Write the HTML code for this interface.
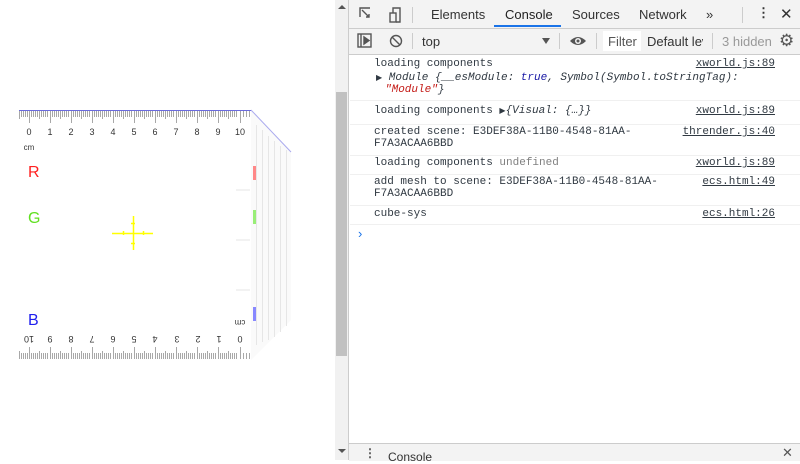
<!DOCTYPE html>
<html><head><style>
body{margin:0;width:800px;height:460px;position:relative;overflow:hidden;background:#fff;font-family:"Liberation Sans",sans-serif}
.a{position:absolute}
.mono{font-family:"Liberation Mono",monospace;font-size:11px;color:#303942}
.row{position:absolute;left:350px;width:450px;border-bottom:1px solid #f0f0f0}
.src{position:absolute;right:25px;text-decoration:underline;color:#303942}
.tab{position:absolute;top:7px;font-size:13px;color:#333}
</style></head><body>
<div class="a" style="left:335px;top:0;width:13px;height:460px;background:#f1f1f1"></div>
<div class="a" style="left:336px;top:92px;width:11px;height:264px;background:#c1c1c1"></div>
<div class="a" style="left:338px;top:5px;border:4px solid transparent;border-bottom:4px solid #555;border-top:0"></div>
<div class="a" style="left:338px;top:449px;border:4px solid transparent;border-top:4px solid #555;border-bottom:0"></div>
<div class="a" style="left:348px;top:0;width:1px;height:460px;background:#ccc"></div>
<svg class="a" style="left:0;top:0" width="335" height="460">
<polygon points="251,110 291,152 291,320 251,360" fill="#fafafa"/>
<line x1="19" y1="110.5" x2="251" y2="110.5" stroke="#6b6bdd" stroke-width="1"/>
<line x1="251" y1="110" x2="291" y2="152" stroke="#aaaaee"/>
<g stroke="#a8a8a8" stroke-width="1" shape-rendering="crispEdges">
<path d="M19.5 111v8M21.5 111v6M23.5 111v6M25.5 111v6M27.5 111v6M29.5 111v12M31.5 111v6M33.5 111v6M35.5 111v6M37.5 111v6M39.5 111v8M41.5 111v6M43.5 111v6M45.5 111v6M47.5 111v6M50.5 111v12M52.5 111v6M54.5 111v6M56.5 111v6M58.5 111v6M60.5 111v8M62.5 111v6M64.5 111v6M66.5 111v6M68.5 111v6M71.5 111v12M73.5 111v6M75.5 111v6M77.5 111v6M79.5 111v6M81.5 111v8M83.5 111v6M85.5 111v6M87.5 111v6M89.5 111v6M92.5 111v12M94.5 111v6M96.5 111v6M98.5 111v6M100.5 111v6M102.5 111v8M104.5 111v6M106.5 111v6M108.5 111v6M110.5 111v6M113.5 111v12M115.5 111v6M117.5 111v6M119.5 111v6M121.5 111v6M123.5 111v8M125.5 111v6M127.5 111v6M129.5 111v6M131.5 111v6M134.5 111v12M136.5 111v6M138.5 111v6M140.5 111v6M142.5 111v6M144.5 111v8M146.5 111v6M148.5 111v6M150.5 111v6M152.5 111v6M155.5 111v12M157.5 111v6M159.5 111v6M161.5 111v6M163.5 111v6M165.5 111v8M167.5 111v6M169.5 111v6M171.5 111v6M173.5 111v6M176.5 111v12M178.5 111v6M180.5 111v6M182.5 111v6M184.5 111v6M186.5 111v8M188.5 111v6M190.5 111v6M192.5 111v6M194.5 111v6M197.5 111v12M199.5 111v6M201.5 111v6M203.5 111v6M205.5 111v6M207.5 111v8M209.5 111v6M211.5 111v6M213.5 111v6M215.5 111v6M218.5 111v12M220.5 111v6M222.5 111v6M224.5 111v6M226.5 111v6M228.5 111v8M230.5 111v6M232.5 111v6M234.5 111v6M236.5 111v6M240.5 111v12M243.5 111v6M246.5 111v6M249.5 111v6"/>
<path d="M19.5 359v-8M21.5 359v-6M23.5 359v-6M25.5 359v-6M27.5 359v-6M29.5 359v-12M31.5 359v-6M33.5 359v-6M35.5 359v-6M37.5 359v-6M39.5 359v-8M41.5 359v-6M43.5 359v-6M45.5 359v-6M47.5 359v-6M50.5 359v-12M52.5 359v-6M54.5 359v-6M56.5 359v-6M58.5 359v-6M60.5 359v-8M62.5 359v-6M64.5 359v-6M66.5 359v-6M68.5 359v-6M71.5 359v-12M73.5 359v-6M75.5 359v-6M77.5 359v-6M79.5 359v-6M81.5 359v-8M83.5 359v-6M85.5 359v-6M87.5 359v-6M89.5 359v-6M92.5 359v-12M94.5 359v-6M96.5 359v-6M98.5 359v-6M100.5 359v-6M102.5 359v-8M104.5 359v-6M106.5 359v-6M108.5 359v-6M110.5 359v-6M113.5 359v-12M115.5 359v-6M117.5 359v-6M119.5 359v-6M121.5 359v-6M123.5 359v-8M125.5 359v-6M127.5 359v-6M129.5 359v-6M131.5 359v-6M134.5 359v-12M136.5 359v-6M138.5 359v-6M140.5 359v-6M142.5 359v-6M144.5 359v-8M146.5 359v-6M148.5 359v-6M150.5 359v-6M152.5 359v-6M155.5 359v-12M157.5 359v-6M159.5 359v-6M161.5 359v-6M163.5 359v-6M165.5 359v-8M167.5 359v-6M169.5 359v-6M171.5 359v-6M173.5 359v-6M176.5 359v-12M178.5 359v-6M180.5 359v-6M182.5 359v-6M184.5 359v-6M186.5 359v-8M188.5 359v-6M190.5 359v-6M192.5 359v-6M194.5 359v-6M197.5 359v-12M199.5 359v-6M201.5 359v-6M203.5 359v-6M205.5 359v-6M207.5 359v-8M209.5 359v-6M211.5 359v-6M213.5 359v-6M215.5 359v-6M218.5 359v-12M220.5 359v-6M222.5 359v-6M224.5 359v-6M226.5 359v-6M228.5 359v-8M230.5 359v-6M232.5 359v-6M234.5 359v-6M236.5 359v-6M240.5 359v-12M243.5 359v-6M246.5 359v-6M249.5 359v-6"/>
</g>
<g stroke="#e6e6e6" shape-rendering="crispEdges"><path d="M256.5 125v220M262.5 130v212M268.5 136v204M274.5 141v196M280.5 146v186M286.5 150v176"/><path d="M236 190h14M236 240h14M236 290h14"/></g>
<g font-size="9" fill="#333" text-anchor="middle">
<text x="29" y="135">0</text><text x="50" y="135">1</text><text x="71" y="135">2</text><text x="92" y="135">3</text><text x="113" y="135">4</text><text x="134" y="135">5</text><text x="155" y="135">6</text><text x="176" y="135">7</text><text x="197" y="135">8</text><text x="218" y="135">9</text><text x="240" y="135">10</text>
<text x="29" y="150" font-size="8">cm</text>
</g>
<g font-size="9" fill="#333" text-anchor="middle">
<text transform="translate(240,336) rotate(180)">0</text><text transform="translate(219,336) rotate(180)">1</text><text transform="translate(198,336) rotate(180)">2</text><text transform="translate(177,336) rotate(180)">3</text><text transform="translate(155,336) rotate(180)">4</text><text transform="translate(134,336) rotate(180)">5</text><text transform="translate(113,336) rotate(180)">6</text><text transform="translate(92,336) rotate(180)">7</text><text transform="translate(71,336) rotate(180)">8</text><text transform="translate(50,336) rotate(180)">9</text><text transform="translate(29,336) rotate(180)">10</text>
<text transform="translate(240,320) rotate(180)" font-size="8">cm</text>
</g>
<text x="28" y="177" font-size="16" fill="#ff2020">R</text>
<text x="28" y="223" font-size="16" fill="#60e020">G</text>
<text x="28" y="325" font-size="16" fill="#2020ee">B</text>
<g stroke="#ffff00" stroke-width="1.5"><path d="M112 233.5h41M133.5 216v34M123.5 231v4M143.5 231v4M131 223.5h4M131 243.5h4"/></g>
<rect x="253" y="166" width="3" height="14" fill="#f88"/>
<rect x="253" y="210" width="3" height="14" fill="#9e7"/>
<rect x="253" y="307" width="3" height="14" fill="#88f"/>
</svg>
<div class="a" style="left:349px;top:0;width:451px;height:28px;background:#f3f3f3;border-bottom:1px solid #ccc"></div>
<svg class="a" style="left:358px;top:6px" width="50" height="18" fill="none" stroke="#555" stroke-width="1.4">
<path d="M2 11V2h10M4 4l7 7M8 11h3v-3"/><rect x="32" y="7" width="6" height="9"/><path d="M35 7V2h7v14h-4"/>
</svg>
<div class="a" style="left:412px;top:7px;width:1px;height:16px;background:#ccc"></div>
<div class="tab" style="left:431px">Elements</div>
<div class="tab" style="left:505px;color:#222">Console</div>
<div class="a" style="left:494px;top:25px;width:67px;height:2px;background:#1a73e8"></div>
<div class="tab" style="left:572px">Sources</div>
<div class="tab" style="left:639px">Network</div>
<div class="tab" style="left:706px">»</div>
<div class="a" style="left:742px;top:7px;width:1px;height:16px;background:#ccc"></div>
<div class="tab" style="left:757px;font-weight:bold;top:5px">⋮</div>
<div class="tab" style="left:780px;font-size:15px;top:5px">✕</div>
<div class="a" style="left:349px;top:29px;width:451px;height:25px;background:#f3f3f3;border-bottom:1px solid #ccc"></div>
<svg class="a" style="left:357px;top:33px" width="50" height="16" fill="none" stroke="#555" stroke-width="1.4">
<rect x="1" y="1" width="13" height="13"/><path d="M4 1v13" /><path d="M7 4l5 3.5-5 3.5z" fill="#555"/><circle cx="39" cy="8" r="5.5"/><path d="M35 4l8 8"/>
</svg>
<div class="a" style="left:412px;top:33px;width:1px;height:16px;background:#ccc"></div>
<div class="a" style="left:422px;top:34px;font-size:13px;color:#333">top</div>
<div class="a" style="left:542px;top:38px;border:4px solid transparent;border-top:6px solid #555;border-bottom:0"></div>
<div class="a" style="left:559px;top:33px;width:1px;height:16px;background:#ccc"></div>
<svg class="a" style="left:569px;top:34px" width="18" height="14"><path d="M1 7Q9-1 17 7Q9 15 1 7z" fill="#555"/><circle cx="9" cy="7" r="3" fill="#f3f3f3"/><circle cx="9" cy="7" r="1.5" fill="#555"/></svg>
<div class="a" style="left:596px;top:33px;width:1px;height:16px;background:#ccc"></div>
<div class="a" style="left:603px;top:31px;width:38px;height:20px;background:#fff"></div>
<div class="a" style="left:608px;top:34px;font-size:13px;color:#555;width:33px;overflow:hidden;white-space:nowrap">Filter</div>
<div class="a" style="left:647px;top:34px;font-size:13px;color:#333;width:56px;overflow:hidden;white-space:nowrap">Default levels</div>
<div class="a" style="left:712px;top:33px;width:1px;height:16px;background:#ccc"></div>
<div class="a" style="left:722px;top:34px;font-size:13px;color:#999">3 hidden</div>
<div class="a" style="left:779px;top:31px;font-size:17px;color:#555">⚙</div>
<div class="row mono" style="top:55px;height:45px">
<div class="a" style="left:24px;top:3px">loading components</div><div class="src" style="top:3px">xworld.js:89</div>
<div class="a" style="left:26px;top:17px;font-size:11px;font-style:italic"><span style="font-size:8px;font-style:normal">▶</span> Module {__esModule: <span style="color:#1a1aa6">true</span>, Symbol(Symbol.toStringTag):</div>
<div class="a" style="left:35px;top:29px;font-style:italic"><span style="color:#c41a16">"Module"</span>}</div>
</div>
<div class="row mono" style="top:101px;height:23px">
<div class="a" style="left:24px;top:4px">loading components <span style="font-size:8px">▶</span><i>{Visual: {…}}</i></div><div class="src" style="top:4px">xworld.js:89</div></div>
<div class="row mono" style="top:125px;height:30px">
<div class="a" style="left:24px;top:1px;width:300px">created scene:  E3DEF38A-11B0-4548-81AA-<br>F7A3ACAA6BBD</div><div class="src" style="top:1px">thrender.js:40</div></div>
<div class="row mono" style="top:156px;height:18px">
<div class="a" style="left:24px;top:1px">loading components  <span style="color:#808080">undefined</span></div><div class="src" style="top:1px">xworld.js:89</div></div>
<div class="row mono" style="top:175px;height:30px">
<div class="a" style="left:24px;top:1px;width:330px">add mesh to scene:  E3DEF38A-11B0-4548-81AA-<br>F7A3ACAA6BBD</div><div class="src" style="top:1px">ecs.html:49</div></div>
<div class="row mono" style="top:206px;height:18px">
<div class="a" style="left:24px;top:2px">cube-sys</div><div class="src" style="top:2px">ecs.html:26</div></div>
<div class="a" style="left:358px;top:226px;color:#1a73e8;font-size:13px">›</div>
<div class="a" style="left:349px;top:443px;width:451px;height:17px;background:#f3f3f3;border-top:1px solid #ccc"></div>
<div class="a" style="left:364px;top:446px;font-size:12px;color:#555;font-weight:bold">⋮</div>
<div class="a" style="left:388px;top:450px;font-size:12px;color:#333">Console</div>
<div class="a" style="left:782px;top:445px;font-size:13px;color:#555">✕</div>
</body></html>
